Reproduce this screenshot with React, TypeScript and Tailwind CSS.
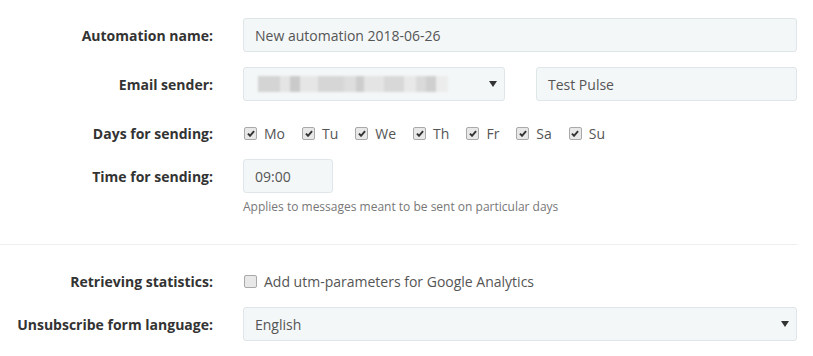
const days = ["Mo", "Tu", "We", "Th", "Fr", "Sa", "Su"];

function Arrow() {
  return (
    <svg width="8" height="6" viewBox="0 0 8 6" className="shrink-0">
      <path d="M0 0 H8 L4 6 Z" fill="#333" />
    </svg>
  );
}

function Check({ checked }: { checked: boolean }) {
  return (
    <span className="flex h-[13px] w-[13px] shrink-0 items-center justify-center rounded-[2px] border border-[#a9a9a9] bg-[#e8e8e8]">
      {checked && (
        <svg width="8" height="7" viewBox="0 0 9 8">
          <path d="M1 4.2 L3.4 6.6 L8 1.2" stroke="#333" strokeWidth="2.2" fill="none" />
        </svg>
      )}
    </span>
  );
}

function Label({ children }: { children: React.ReactNode }) {
  return (
    <div className="flex items-center justify-end text-right text-[14px] font-bold text-[#333]">
      {children}
    </div>
  );
}

const box =
  "flex h-[34px] items-center rounded-[3px] border border-[#dfe6e8] bg-[#f4f7f8] px-[11px] text-[14px] text-[#555]";

// blurred-out sender address
const blur = [
  ["w-[22px]", "bg-[#d4d4d4]"],
  ["w-[10px]", "bg-[#e4e4e4]"],
  ["w-[10px]", "bg-[#cacaca]"],
  ["w-[18px]", "bg-[#e6e6e6]"],
  ["w-[26px]", "bg-[#d6d6d6]"],
  ["w-[12px]", "bg-[#dedede]"],
  ["w-[8px]", "bg-[#cdcdcd]"],
  ["w-[20px]", "bg-[#e4e4e4]"],
  ["w-[20px]", "bg-[#d8d8d8]"],
  ["w-[12px]", "bg-[#e8e8e8]"],
  ["w-[10px]", "bg-[#dadada]"],
  ["w-[10px]", "bg-[#cfcfcf]"],
  ["w-[12px]", "bg-[#ececec]"],
];

export default function App() {
  return (
    <div className="min-h-[356px] w-[813px] bg-white pr-4 font-['Open_Sans',sans-serif]">
      <div className="grid grid-cols-[213px_1fr] gap-x-[30px] pt-[18px]">
        <Label>Automation name:</Label>
        <div className={box}>New automation 2018-06-26</div>
      </div>

      <div className="mt-[15px] grid grid-cols-[213px_1fr] gap-x-[30px]">
        <Label>Email sender:</Label>
        <div className="flex gap-[31px]">
          <div className={box + " w-[262px] justify-between pl-[14px] pr-[7px]"}>
            <div className="flex h-[16px] blur-[1px]">
              {blur.map(([w, c], i) => (
                <span key={i} className={`${w} ${c} h-full`} />
              ))}
            </div>
            <Arrow />
          </div>
          <div className={box + " flex-1"}>Test Pulse</div>
        </div>
      </div>

      <div className="mt-[22px] grid h-[20px] grid-cols-[213px_1fr] gap-x-[30px]">
        <Label>Days for sending:</Label>
        <div className="flex items-center gap-[17px] pl-[1px] text-[14px] text-[#555]">
          {days.map((d) => (
            <label key={d} className="flex items-center gap-[7px]">
              <Check checked />
              {d}
            </label>
          ))}
        </div>
      </div>

      <div className="mt-4 grid grid-cols-[213px_1fr] gap-x-[30px]">
        <Label>Time for sending:</Label>
        <div className={box + " w-[90px]"}>09:00</div>
      </div>
      <div className="mt-[6px] grid grid-cols-[213px_1fr] gap-x-[30px]">
        <div />
        <p className="text-[12px] leading-[16px] text-[#777]">Applies to messages meant to be sent on particular days</p>
      </div>

      <div className="mt-[29px] h-px bg-[#eeeeee]" />

      <div className="mt-[26px] grid h-[20px] grid-cols-[213px_1fr] gap-x-[30px]">
        <Label>Retrieving statistics:</Label>
        <label className="flex items-center gap-[7px] pl-[1px] text-[14px] text-[#555]">
          <Check checked={false} />
          Add utm-parameters for Google Analytics
        </label>
      </div>

      <div className="mt-4 grid grid-cols-[213px_1fr] gap-x-[30px]">
        <Label>Unsubscribe form language:</Label>
        <div className={box + " justify-between pr-[7px]"}>
          English
          <Arrow />
        </div>
      </div>
    </div>
  );
}
